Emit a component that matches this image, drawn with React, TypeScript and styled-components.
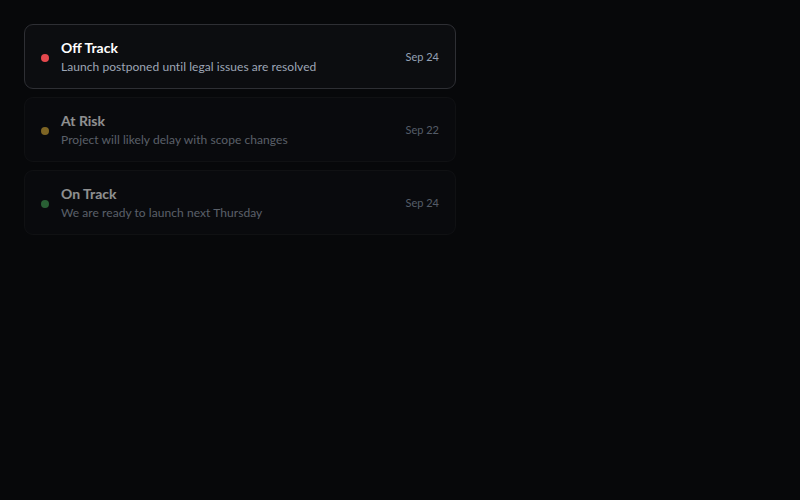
import styled, { createGlobalStyle } from "styled-components";

const GlobalStyle = createGlobalStyle`
  html, body {
    margin: 0;
    padding: 0;
    background: #07080a;
    font-family: Lato, "Noto Sans", sans-serif;
  }
`;

const Page = styled.div`
  min-height: 500px;
  padding: 24px;
  box-sizing: border-box;
`;

const List = styled.div`
  width: 432px;
  display: flex;
  flex-direction: column;
  gap: 8px;
`;

const Card = styled.div<{ $active: boolean }>`
  height: 65px;
  box-sizing: border-box;
  display: flex;
  align-items: center;
  gap: 12px;
  padding: 2px 16px 0;
  background: #0c0d10;
  border: 1px solid ${(p) => (p.$active ? "#2e2f34" : "#18191c")};
  border-radius: 9px;
  opacity: ${(p) => (p.$active ? 1 : 0.55)};
`;

const Dot = styled.span<{ $color: string }>`
  width: 8px;
  height: 8px;
  border-radius: 50%;
  background: ${(p) => p.$color};
  flex-shrink: 0;
`;

const Body = styled.div`
  flex: 1;
  display: flex;
  flex-direction: column;
  gap: 1px;
`;

const Title = styled.div`
  color: #ffffff;
  font-size: 14px;
  font-weight: 700;
  line-height: 18px;
`;

const Desc = styled.div`
  color: #9ea6b6;
  font-size: 12px;
  letter-spacing: 0.06px;
  line-height: 18px;
`;

const DateText = styled.div`
  color: #94a0b5;
  font-size: 11px;
  margin-top: -2px;
`;

const items = [
  { title: "Off Track", desc: "Launch postponed until legal issues are resolved", date: "Sep 24", color: "#e5484d", active: true },
  { title: "At Risk", desc: "Project will likely delay with scope changes", date: "Sep 22", color: "#e0b23a", active: false },
  { title: "On Track", desc: "We are ready to launch next Thursday", date: "Sep 24", color: "#46a758", active: false },
];

export default function App() {
  return (
    <Page>
      <GlobalStyle />
      <List>
        {items.map((it) => (
          <Card key={it.title} $active={it.active}>
            <Dot $color={it.color} />
            <Body>
              <Title>{it.title}</Title>
              <Desc>{it.desc}</Desc>
            </Body>
            <DateText>{it.date}</DateText>
          </Card>
        ))}
      </List>
    </Page>
  );
}
